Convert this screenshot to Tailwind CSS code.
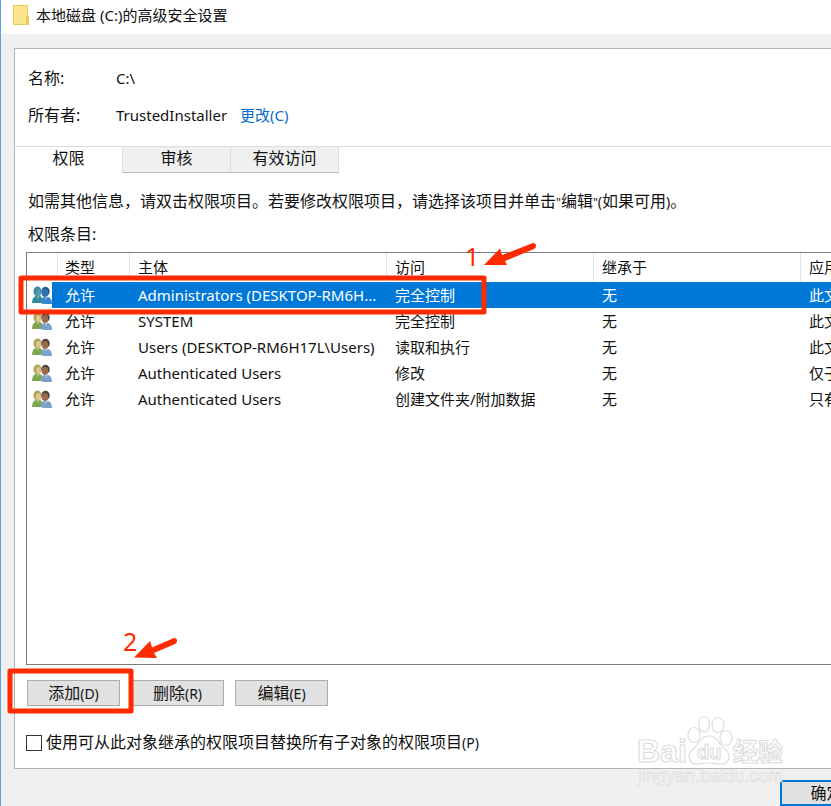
<!DOCTYPE html>
<html lang="zh-CN">
<head>
    <meta charset="UTF-8">
    <meta name="viewport" content="width=device-width, initial-scale=1.0">
    <title>本地磁盘 (C:)的高级安全设置</title>
    <script src="https://cdn.jsdelivr.net/npm/@tailwindcss/browser@4"></script>
</head>
<body class="relative min-h-screen flex flex-col overflow-hidden bg-[#f0f0f0] border-l border-[#5aa3e0] font-['Noto_Sans','Noto_Sans_CJK_SC',sans-serif] text-[15px] leading-5 text-[#111]">
    <header class="flex items-center h-[34px] pb-1 pl-3 gap-[7px] bg-white">
        <svg class="w-4 h-5" viewBox="0 0 16 20">
            <path d="M.5 .5h14v10.500l1 1v7.500H.5z" fill="#fde48f" stroke="#ecc95b"/>
            <path d="M13 11.500l2.500-.8v8.800H13z" fill="#eec94f"/>
        </svg>
        <h1 class="text-[15px]">本地磁盘 (C:)的高级安全设置</h1>
    </header>

    <main class="flex-1 flex flex-col mt-[14px] ml-[13px] bg-white border-l border-y border-[#b4b4b4]">
        <dl class="grid grid-cols-[88px_1fr] gap-y-[17px] pl-[13px] pt-[19px] pb-[21px]">
            <dt class="text-base leading-5">名称:</dt>
            <dd>C:\</dd>
            <dt class="text-base leading-5">所有者:</dt>
            <dd class="flex gap-[13px]">TrustedInstaller <a href="#" class="text-[#0a6cce]">更改(C)</a></dd>
        </dl>

        <div role="tablist" class="flex h-[27px] border-t border-[#dcdcdc] text-base leading-5">
            <button role="tab" aria-selected="true" class="w-[108px] pb-[5px] border-r border-[#dcdcdc]">权限</button>
            <button role="tab" aria-selected="false" class="w-[108px] pb-1 bg-[#f0f0f0] border-r border-b border-r-[#dcdcdc] border-b-[#b8b8b8]">审核</button>
            <button role="tab" aria-selected="false" class="w-[108px] pb-1 bg-[#f0f0f0] border-r border-b border-r-[#dcdcdc] border-b-[#b8b8b8]">有效访问</button>
        </div>

        <section class="flex-1 flex flex-col pl-[11px] pt-[18px]">
            <p class="pl-[2px] text-base leading-5 whitespace-nowrap">如需其他信息，请双击权限项目。若要修改权限项目，请选择该项目并单击<span class="text-xs">"</span>编辑<span class="text-xs">"</span><span class="text-sm">(</span>如果可用<span class="text-sm">)</span>。</p>
            <p class="pl-[2px] mt-3 mb-2 text-base leading-5">权限条目:</p>

            <div class="flex-1 overflow-hidden border-l border-y border-[#7a7a7a]">
                <table class="w-full table-fixed whitespace-nowrap text-left">
                    <colgroup>
                        <col class="w-[25px]">
                        <col class="w-[77px]">
                        <col class="w-[257px]">
                        <col class="w-[207px]">
                        <col class="w-[207px]">
                        <col>
                    </colgroup>
                    <thead>
                        <tr class="h-[29px]">
                            <th></th>
                            <th class="p-0 font-normal"><div class="h-[29px] ml-[5px] pl-[7px] pt-1 border-l border-[#e5e5e5]">类型</div></th>
                            <th class="p-0 font-normal"><div class="h-[29px] pl-2 pt-1 border-l border-[#e5e5e5]">主体</div></th>
                            <th class="p-0 font-normal"><div class="h-[29px] pl-2 pt-1 border-l border-[#e5e5e5]">访问</div></th>
                            <th class="p-0 font-normal"><div class="h-[29px] pl-2 pt-1 border-l border-[#e5e5e5]">继承于</div></th>
                            <th class="p-0 font-normal"><div class="h-[29px] pl-2 pt-1 border-l border-[#e5e5e5]">应用</div></th>
                        </tr>
                    </thead>
                    <tbody id="entries"></tbody>
                </table>
            </div>

            <div class="flex gap-[11px] pl-px mt-[15px] text-base leading-5">
                <button class="w-[93px] h-[26px] bg-[#e1e1e1] border border-[#adadad]">添加<span class="text-sm">(D)</span></button>
                <button class="w-[93px] h-[26px] bg-[#e1e1e1] border border-[#adadad]">删除<span class="text-sm">(R)</span></button>
                <button class="w-[93px] h-[26px] bg-[#e1e1e1] border border-[#adadad]">编辑<span class="text-sm">(E)</span></button>
            </div>

            <div class="flex items-center gap-1 mt-[26px] mb-[15px]">
                <input id="replace" type="checkbox" class="appearance-none size-4 bg-white border border-[#333]">
                <label for="replace" class="text-base leading-5">使用可从此对象继承的权限项目替换所有子对象的权限项目<span class="text-sm">(P)</span></label>
            </div>
        </section>
    </main>

    <footer class="flex justify-end pt-[11px]">
        <button class="w-[93px] h-[26px] -mr-[42px] bg-[#e1e1e1] border-2 border-[#0078d7] text-base leading-5">确定</button>
    </footer>

    <!-- watermark -->
    <svg class="absolute left-[630px] top-[710px] w-[160px] h-[84px] pointer-events-none" viewBox="0 0 160 84">
        <g fill="#fff" stroke="#dedede" stroke-width="1.2">
            <ellipse cx="63" cy="25" rx="6" ry="7.500"/>
            <ellipse cx="73" cy="14" rx="5.500" ry="8"/>
            <ellipse cx="87" cy="15" rx="6" ry="7.500"/>
            <ellipse cx="95" cy="28" rx="6" ry="7.500"/>
            <path d="M78 26c7 0 9 5 12 9s8 6 8 11c0 5-3 8-8 8-5 0-8-1-12-1s-7 1-12 1-8-3-8-8c0-5 5-7 8-11s5-9 12-9z"/>
            <g font-family="Liberation Sans, sans-serif" font-weight="bold">
                <text x="6" y="52" font-size="32">Bai</text>
                <text x="66" y="49" font-size="20">du</text>
            </g>
            <text x="102" y="51" font-size="25" font-weight="bold" font-family="Noto Sans CJK SC, sans-serif">经验</text>
            <text x="7" y="72" font-size="18" fill="#f6f6f6" stroke="#dadada" stroke-width=".6" font-family="Liberation Sans, sans-serif">jingyan.baidu.com</text>
        </g>
    </svg>

    <!-- red step marks -->
    <svg class="absolute left-0 top-0 w-[560px] h-[720px] pointer-events-none" viewBox="1 0 560 720">
        <g fill="none" stroke="#ff2a00" stroke-width="5" stroke-linejoin="round">
            <rect x="21" y="278" width="463" height="34"/>
            <rect x="10" y="671" width="121" height="40"/>
        </g>
        <g fill="#ff2a00">
            <path d="M484 265l16-16.500 2 6.500 31-12q3 0 3 3 0 2-2 3l-29 12 2 4z"/>
            <path d="M134 657.500l16-16.500 2 6.500 22-9.500q3 0 3 3 0 2-2 3l-21 9 3 5z"/>
            <g font-size="25" font-family="Noto Sans, sans-serif">
                <text x="465" y="266">1</text>
                <text x="123" y="651">2</text>
            </g>
        </g>
    </svg>

    <script>
        const entries = [
            { who: "Administrators (DESKTOP-RM6H...", access: "完全控制", scope: "此文" },
            { who: "SYSTEM", access: "完全控制", scope: "此文" },
            { who: "Users (DESKTOP-RM6H17L\\Users)", access: "读取和执行", scope: "此文" },
            { who: "Authenticated Users", access: "修改", scope: "仅子" },
            { who: "Authenticated Users", access: "创建文件夹/附加数据", scope: "只有" }
        ];

        // Colours: left hair, left face, left body, right hair, right face, right body
        const normal = ["#b3a255", "#dcc78f", "#7da650", "#4f453c", "#9a6b4d", "#7ba2cf"];
        const tinted = ["#3f87a0", "#4f9db8", "#2e8c9a", "#205c96", "#2b73ad", "#3686cf"];

        function usersIcon(c) {
            return `
                <svg class="w-5 h-[18px] ml-[5px]" viewBox="0 0 20 18">
                    <path d="M0 17q0-6 4-7h4q3 1 3 7z" fill="${c[2]}"/>
                    <path d="M4 9l2 4 2-4z" fill="#e9edda" opacity=".5"/>
                    <ellipse cx="5.500" cy="5.500" rx="4" ry="5" fill="${c[0]}"/>
                    <ellipse cx="6.500" cy="6.500" rx="2.500" ry="3.500" fill="${c[1]}"/>
                    <path d="M9 17q0-5 3-6h4q4 1 4 7h-8q-2 0-3-1z" fill="${c[5]}"/>
                    <path d="M12 10l2 4 2-4z" fill="#e6eef8" opacity=".5"/>
                    <ellipse cx="13.500" cy="5.500" rx="4.200" ry="4.700" fill="${c[3]}"/>
                    <ellipse cx="13" cy="7" rx="3.200" ry="4" fill="${c[4]}"/>
                </svg>`;
        }

        document.getElementById('entries').innerHTML = entries.map((e, i) => {
            const cell = i === 0 ? 'p-0 bg-[#0078d7] text-white' : 'p-0';
            return `
                <tr class="h-[26px]">
                    <td class="p-0">${usersIcon(i === 0 ? tinted : normal)}</td>
                    <td class="${cell}"><div class="pl-[13px]">允许</div></td>
                    <td class="${cell}"><div class="pl-[9px]">${e.who}</div></td>
                    <td class="${cell}"><div class="pl-[9px]">${e.access}</div></td>
                    <td class="${cell}"><div class="pl-[9px]">无</div></td>
                    <td class="${cell}"><div class="pl-[9px]">${e.scope}</div></td>
                </tr>`;
        }).join('');
    </script>
</body>
</html>
